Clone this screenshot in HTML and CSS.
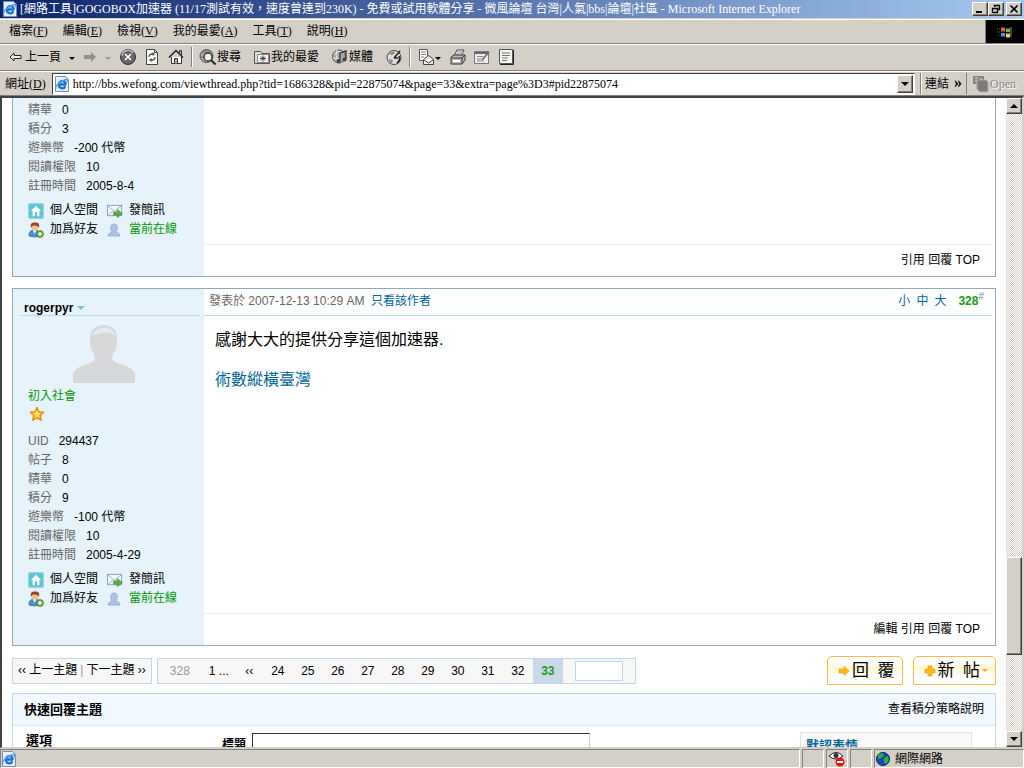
FILE: index.html
```html
<!DOCTYPE html>
<html lang="zh-TW">
<head>
  <meta charset="UTF-8" />
  <meta name="viewport" content="width=device-width, initial-scale=1" />
  <title>[網路工具]GOGOBOX加速器 - 微風論壇</title>
  <link rel="stylesheet" href="styles.css">
</head>
<body>

  <!-- 共用圖示 -->
  <svg class="sprite" aria-hidden="true">
    <symbol id="i-ie" viewBox="0 0 16 16">
      <path d="M1.500 .5h10l3 3v12h-13z" fill="#e4effb" stroke="#7890b8" />
      <path d="M12 8.500H5a3.300 3.300 0 0 0 6.300 1.800M5 8.500a3.400 3.400 0 0 1 6.800 0" fill="none" stroke="#1f6fd0" stroke-width="2.400" />
      <path d="M2 13C0 11 6 5 12 3.500c2-.4 2 1 1 2.500" fill="none" stroke="#49a0e8" stroke-width="1.300" />
    </symbol>
    <symbol id="i-home" viewBox="0 0 14 14">
      <rect x=".5" y=".5" width="13" height="13" rx="1.500" fill="#5cc4d4" stroke="#8fd6e2" />
      <path d="M7 2.500 2.500 7H4v4.500h2V8h2v3.500h2V7h1.500z" fill="#fff" />
    </symbol>
    <symbol id="i-mail" viewBox="0 0 17 14">
      <rect x=".5" y="1" width="15" height="11" fill="#f4f8ff" stroke="#7f9fd0" />
      <path d="m1 1.500 7 6 7-6M1 12l5-5M15 12l-4-5" fill="none" stroke="#8fa8cc" />
      <path d="M7 8h4V5.500l5.500 4.300L11 14v-2.500H7z" fill="#5fae3c" stroke="#3c8524" stroke-width=".6" />
    </symbol>
    <symbol id="i-friend" viewBox="0 0 16 16">
      <path d="M1 14c-.4-4 2-6 5.500-6S12 10 12 14q-5.500 2-11 0z" fill="#4a90dc" stroke="#2d62a8" stroke-width=".7" />
      <path d="m5 8 1.500 4L8.500 8z" fill="#fff" />
      <circle cx="7" cy="5" r="3.500" fill="#f3c092" />
      <path d="M3 6C2 1 4 .5 7 .5s5 1 4 5.500C10 3.500 8 4 6.500 3.600 5 3.500 4 4 3 6z" fill="#914b20" />
      <circle cx="12" cy="12" r="3.500" fill="#6cae45" stroke="#3c7d28" stroke-width=".7" />
      <path d="M12 10v4M10 12h4" stroke="#fff" stroke-width="1.300" />
    </symbol>
    <symbol id="i-online" viewBox="0 0 14 14">
      <path d="M1 13c0-3 2-3 4-4C2.500 5 3.500 1 7 1s4.500 4 2 8c2 1 4 1 4 4z" fill="#abc3e6" stroke="#86a5d3" stroke-width=".7" />
    </symbol>
  </svg>

  <header class="titlebar">
    <svg class="ico16"><use href="#i-ie" /></svg>
    <span class="window-title">[網路工具]GOGOBOX加速器 (11/17測試有效，速度曾達到230K) - 免費或試用軟體分享 - 微風論壇 台灣|人氣|bbs|論壇|社區 - Microsoft Internet Explorer</span>
    <div class="window-buttons">
      <button class="win-btn" aria-label="最小化"><svg viewBox="0 0 12 10"><path d="M2 8h6" stroke="#000" stroke-width="2" /></svg></button>
      <button class="win-btn" aria-label="還原"><svg viewBox="0 0 12 10"><path d="M4.500 3V1.500h5v4H8M4 1.500h6M2.500 4.500h5v4h-5zM2 4.500h6" fill="none" stroke="#000" stroke-width="1.300" /></svg></button>
      <button class="win-btn close" aria-label="關閉"><svg viewBox="0 0 12 10"><path d="m2.500 1.500 7 7m0-7-7 7" stroke="#000" stroke-width="1.600" /></svg></button>
    </div>
  </header>

  <div class="menubar">
    <nav class="menus">
      <button>檔案(<u>F</u>)</button>
      <button>編輯(<u>E</u>)</button>
      <button>檢視(<u>V</u>)</button>
      <button>我的最愛(<u>A</u>)</button>
      <button>工具(<u>T</u>)</button>
      <button>說明(<u>H</u>)</button>
    </nav>
    <div class="throbber">
      <svg viewBox="0 0 18 16">
        <path d="M5 4q2-1.500 4 0v4q-2-1.500-4 0z" fill="#d8603c" />
        <path d="M10 4q2 1.500 4 0v4q-2 1.500-4 0z" fill="#6fae52" />
        <path d="M5 9q2-1.500 4 0v4q-2-1.500-4 0z" fill="#5a8ee0" />
        <path d="M10 9q2 1.500 4 0v4q-2 1.500-4 0z" fill="#e8cf50" />
        <path d="M1 5h3M1 8h3M2 11h2" stroke="#5d6070" stroke-dasharray="1 1" />
        <path d="M9.500 3v11M5 8.500h9" stroke="#111" />
        <path d="M15 3v10" stroke="#888" />
      </svg>
    </div>
  </div>

  <div class="toolbar">
    <button class="tool back"><svg class="ico14" viewBox="0 0 14 14"><path d="M6 3 2 7l4 4V8.500h7v-3H6z" fill="#f2f2ee" stroke="#222" /></svg>上一頁</button>
    <i class="caret"></i>
    <button class="tool forward" aria-label="下一頁"><svg class="ico14" viewBox="0 0 14 14"><path d="M8 2v3H1v4h7v3l5-5z" fill="#909090" /></svg></button>
    <i class="caret dim"></i>
    <button class="tool" aria-label="停止"><svg class="ico18" viewBox="0 0 18 18"><circle cx="9" cy="9" r="7.500" fill="#666" stroke="#333" /><path d="M3 8a6 6 0 0 1 11-3" fill="none" stroke="#bbb" stroke-width="1.500" /><path d="m6 6 6 6m0-6-6 6" stroke="#fff" stroke-width="1.700" /></svg></button>
    <button class="tool" aria-label="重新整理"><svg class="ico18" viewBox="0 0 18 18"><path d="M3.500 1.500h8l3 3v12h-11z" fill="#fff" stroke="#444" /><path d="M11.500 1.500v3h3" fill="none" stroke="#444" /><path d="M6 9c0-2 1-3 3-3h1M12 9c0 2-1 3-3 3H8" fill="none" stroke="#555" stroke-width="1.300" /><path d="m9.500 4 2.500 2-2.500 2zM8.500 10 6 12l2.500 2z" fill="#444" /></svg></button>
    <button class="tool" aria-label="首頁"><svg class="ico18" viewBox="0 0 18 18"><path d="M4.500 9v6.500h10V9" fill="#fff" stroke="#333" /><path d="m2 9.500 7-7 7 7" fill="none" stroke="#222" stroke-width="1.500" /><path d="M12.500 5V2.500h2V7M7.500 15.500v-5h3v5" fill="#aaa" stroke="#333" /></svg></button>
    <i class="divider"></i>
    <button class="tool"><svg class="ico18" viewBox="0 0 18 18"><circle cx="7.500" cy="8" r="6.500" fill="#aaa" stroke="#555" /><path d="M3 5q5-4 9 0M2 9h4M6 2v4" stroke="#777" fill="none" /><circle cx="9" cy="9" r="4" fill="#eee" stroke="#333" stroke-width="1.300" /><path d="m12 12 4.500 4.500" stroke="#222" stroke-width="2" /></svg>搜尋</button>
    <button class="tool wide"><svg class="ico18" viewBox="0 0 18 18"><path d="M1.500 15.500v-12h6l1.500 2h7.500v10z" fill="#ddd" stroke="#555" /><path d="M4.500 6.500h11v8h-11z" fill="#f7f7f7" stroke="#888" /><path d="M10 7.500v6m-3-3h6m-5-2 4 4m0-4-4 4" stroke="#333" stroke-width=".9" /></svg>我的最愛</button>
    <button class="tool wide"><svg class="ico18" viewBox="0 0 18 18"><circle cx="8" cy="8.500" r="6.500" fill="#aaa" stroke="#555" /><path d="M3 6q4-4 8-2M2 10q5 3 8 0M6 2q-2 5 1 12" stroke="#eee" fill="none" /><path d="M9 13V5l6-2v8" fill="none" stroke="#333" stroke-width="1.300" /><circle cx="7.500" cy="13" r="2" fill="#444" /><circle cx="13.500" cy="11.500" r="2" fill="#444" /></svg>媒體</button>
    <button class="tool wide" aria-label="記錄"><svg class="ico18" viewBox="0 0 18 18"><circle cx="9" cy="9.500" r="7" fill="#ddd" stroke="#444" /><path d="M4 6q3-3 6-2-1 3-4 3zM4 11l4 1-1 3q-3-1-3-4z" fill="#888" /><path d="m9 10 6-7M9 10h4M14 8q2 4-2 7" fill="none" stroke="#222" stroke-width="1.600" /></svg></button>
    <i class="divider"></i>
    <button class="tool" aria-label="郵件"><svg class="ico18" viewBox="0 0 18 18"><path d="M2.500 1.500h8v11h-8z" fill="#fff" stroke="#555" /><path d="M4 4h5M4 6.500h5M4 9h3" stroke="#777" /><path d="m6.500 11.500 5-4 5 4v5h-10z" fill="#eee" stroke="#444" /><path d="m7 12 4.500 3 4.500-3" fill="none" stroke="#444" /></svg></button>
    <i class="caret near"></i>
    <button class="tool" aria-label="列印"><svg class="ico18" viewBox="0 0 18 18"><path d="m5 8 3-6h7l-3 6z" fill="#fff" stroke="#444" /><path d="M8 4h5M7 6h5" stroke="#888" /><path d="m2 9 3-2h11v5l-3 4H2z" fill="#bbb" stroke="#333" /><path d="M3 10h10l3-3M13 10v5" fill="none" stroke="#333" /><path d="M4 13h7" stroke="#fff" stroke-width="2" /></svg></button>
    <button class="tool" aria-label="編輯"><svg class="ico18" viewBox="0 0 18 18"><path d="M1.500 3.500h14v12h-14z" fill="#eee" stroke="#777" /><path d="M2 5h13" stroke="#666" stroke-width="2" /><path d="M4 8.500h6M4 11h4M4 13h7" stroke="#888" /><path d="m9 12 7-8" stroke="#666" stroke-width="1.700" /></svg></button>
    <button class="tool" aria-label="討論"><svg class="ico18" viewBox="0 0 18 18"><path d="M2.500 1.500h13v14h-13z" fill="#f4f4f4" stroke="#555" /><path d="M5 5h8M5 7.500h8M5 10h6M5 12.500h5" stroke="#777" /><path d="M3 16.500h13.500V2" stroke="#222" fill="none" /></svg></button>
  </div>

  <div class="addressbar">
    <label for="address">網址(<u>D</u>)</label>
    <div class="address-field">
      <svg class="ico16"><use href="#i-ie" /></svg>
      <input type="text" id="address" value="http://bbs.wefong.com/viewthread.php?tid=1686328&amp;pid=22875074&amp;page=33&amp;extra=page%3D3#pid22875074" />
      <button class="win-btn drop" aria-label="展開"><i class="caret"></i></button>
    </div>
    <button class="links-btn">連結 <b>»</b></button>
    <button class="open-btn" disabled><svg class="ico18" viewBox="0 0 18 18"><path d="M1 1h11v8H1z" fill="#858585" /><path d="M5 5h9l2 2v10H8l-3-3z" fill="#7c7c7c" stroke="#aaa" /><path d="M3 3h3M8 3l2 2M3 6h2" stroke="#ddd" /></svg>Open</button>
  </div>

  <div class="viewport">
    <main class="page">

      <article class="post clipped">
        <aside class="author">
          <dl class="profile">
            <div><dt>精華</dt><dd>0</dd></div>
            <div><dt>積分</dt><dd>3</dd></div>
            <div><dt>遊樂幣</dt><dd>-200 代幣</dd></div>
            <div><dt>閱讀權限</dt><dd>10</dd></div>
            <div><dt>註冊時間</dt><dd>2005-8-4</dd></div>
          </dl>
          <div class="actions">
            <a href="#"><svg class="ico16"><use href="#i-home" /></svg>個人空間</a>
            <a href="#"><svg class="ico16"><use href="#i-mail" /></svg>發簡訊</a>
            <a href="#"><svg class="ico16"><use href="#i-friend" /></svg>加爲好友</a>
            <span class="online"><svg class="ico14"><use href="#i-online" /></svg>當前在線</span>
          </div>
        </aside>
        <section class="content">
          <div class="message"></div>
          <footer class="post-foot"><a href="#">引用</a> <a href="#">回覆</a> <a href="#">TOP</a></footer>
        </section>
      </article>

      <article class="post">
        <aside class="author">
          <h3 class="name"><a href="#">rogerpyr</a><svg viewBox="0 0 8 5"><path d="M0 0h8L4 4z" fill="#76c1dc" /></svg></h3>
          <svg class="avatar" viewBox="0 0 62 58">
            <path d="M0 58V50c1-8 10-9 19-13 3-1 3-4 2-8-3-4-4-9-4-14C17 5 22 0 31 0s13 5 13 15c0 5-1 10-4 14-1 4-1 7 2 8 9 4 19 5 20 13v8z" fill="#d6d8da" />
            <path d="M19 10C21 2 39-1 42 10c-8-5-15 0-23 0z" fill="#e7eaec" />
          </svg>
          <p class="rank">初入社會</p>
          <svg class="star" viewBox="0 0 16 16"><path d="m8 1.500 2 4.300 4.700.5-3.500 3.200 1 4.700L8 11.900l-4.200 2.300 1-4.700L1.300 6.300 6 5.800z" fill="#ffd83c" stroke="#e58a12" stroke-width="1.400" stroke-linejoin="round" /><path d="m8 5 .8 2.500 2 .2-3.500 1z" fill="#fff6b0" /></svg>
          <dl class="profile">
            <div><dt>UID</dt><dd>294437</dd></div>
            <div><dt>帖子</dt><dd>8</dd></div>
            <div><dt>精華</dt><dd>0</dd></div>
            <div><dt>積分</dt><dd>9</dd></div>
            <div><dt>遊樂幣</dt><dd>-100 代幣</dd></div>
            <div><dt>閱讀權限</dt><dd>10</dd></div>
            <div><dt>註冊時間</dt><dd>2005-4-29</dd></div>
          </dl>
          <div class="actions">
            <a href="#"><svg class="ico16"><use href="#i-home" /></svg>個人空間</a>
            <a href="#"><svg class="ico16"><use href="#i-mail" /></svg>發簡訊</a>
            <a href="#"><svg class="ico16"><use href="#i-friend" /></svg>加爲好友</a>
            <span class="online"><svg class="ico14"><use href="#i-online" /></svg>當前在線</span>
          </div>
        </aside>
        <section class="content">
          <header class="post-head">
            <span>發表於 2007-12-13 10:29 AM&nbsp; <a href="#">只看該作者</a></span>
            <span class="sizes"><a href="#">小</a><a href="#">中</a><a href="#">大</a><strong>328<sup>#</sup></strong></span>
          </header>
          <div class="message">
            <p>感謝大大的提供分享這個加速器.</p>
            <p><a href="#">術數縱橫臺灣</a></p>
          </div>
          <footer class="post-foot"><a href="#">編輯</a> <a href="#">引用</a> <a href="#">回覆</a> <a href="#">TOP</a></footer>
        </section>
      </article>

      <div class="pagebar">
        <div class="neighbors"><span>‹‹ <a href="#">上一主題</a></span><i>|</i><span><a href="#">下一主題</a> ››</span></div>
        <nav class="pages">
          <em>328</em>
          <a href="#" class="first">1 ...</a>
          <a href="#" class="prev">‹‹</a>
          <a href="#">24</a>
          <a href="#">25</a>
          <a href="#">26</a>
          <a href="#">27</a>
          <a href="#">28</a>
          <a href="#">29</a>
          <a href="#">30</a>
          <a href="#">31</a>
          <a href="#">32</a>
          <strong>33</strong>
          <input type="text" aria-label="頁碼" />
        </nav>
        <div class="post-buttons">
          <button><svg class="ico12" viewBox="0 0 12 12"><path d="M1 4h5V1.500L11 6l-5 4.500V8H1z" fill="#fdb913" stroke="#e8a020" stroke-width=".7" /></svg>回&ensp;覆</button>
          <button><svg class="ico12" viewBox="0 0 12 12"><path d="M4 1h4v3h3v4H8v3H4V8H1V4h3z" fill="#fdb913" stroke="#e8a020" stroke-width=".7" /></svg>新&ensp;帖<i class="caret gold"></i></button>
        </div>
      </div>

      <section class="quick-reply">
        <header><h4>快速回覆主題</h4><a href="#">查看積分策略說明</a></header>
        <div class="reply-form">
          <h5>選項</h5>
          <div class="subject"><label for="subject">標題</label><input type="text" id="subject" /></div>
          <div class="smilies"><a href="#">默認表情</a></div>
        </div>
      </section>

    </main>

    <div class="scrollbar">
      <button class="win-btn" aria-label="向上捲動"><i class="caret up"></i></button>
      <div class="track"><div class="thumb"></div></div>
      <button class="win-btn" aria-label="向下捲動"><i class="caret"></i></button>
    </div>
  </div>

  <footer class="statusbar">
    <div class="status-main"><svg class="ico16"><use href="#i-ie" /></svg></div>
    <div class="pane"></div>
    <div class="pane"><svg class="ico18" viewBox="0 0 18 18"><path d="M1 6q7-7 14 0-7 6-14 0z" fill="#fff" stroke="#222" /><circle cx="8" cy="5.500" r="2.500" fill="#333" /><circle cx="12" cy="12" r="4.500" fill="#e01818" /><path d="M9 12h6" stroke="#fff" stroke-width="2" /></svg></div>
    <div class="pane"></div>
    <div class="pane zone"><svg class="ico16" viewBox="0 0 16 16"><circle cx="8" cy="8" r="6.500" fill="#1548b8" stroke="#0a2060" /><path d="M3 4q3-3 6-1l-1 3-3 1-2 2zM9 7l4-2 1 4-3 4-2-2z" fill="#35b035" /></svg>網際網路</div>
  </footer>

</body>
</html>
```

FILE: styles.css
```css
* {
  box-sizing: border-box;
}
body {
  margin: 0;
  height: 100vh;
  display: flex;
  flex-direction: column;
  overflow: hidden;
  background: #d4d0c8;
  color: #000;
  font: 12px/16px "Liberation Serif", "Noto Sans CJK TC", serif;
}
button, input {
  font: inherit;
  color: inherit;
}
button {
  padding: 0;
  border: 0;
  background: none;
  white-space: nowrap;
}
a {
  color: inherit;
  text-decoration: none;
}
h3, h4, h5, p, dl, dd {
  margin: 0;
}
svg {
  flex: none;
  display: block;
}
.sprite {
  display: none;
}
.ico12 { width: 12px; height: 12px; }
.ico14 { width: 14px; height: 14px; }
.ico16 { width: 16px; height: 16px; }
.ico18 { width: 18px; height: 18px; }

/* 小三角形 */
.caret {
  flex: none;
  border: 3px solid transparent;
  border-top-color: #000;
  border-bottom: 0;
}
.caret.dim { border-top-color: #999; }
.caret.gold { border-top-color: #f0b030; }
.caret.up {
  border: 4px solid transparent;
  border-bottom-color: #000;
  border-top: 0;
}

/* 視窗外框 */
.titlebar {
  height: 18px;
  display: flex;
  align-items: center;
  gap: 2px;
  padding: 0 2px;
  background: linear-gradient(to right, #0a246a, #a6caf0);
  color: #fff;
}
.window-title {
  flex: 1;
  overflow: hidden;
  white-space: nowrap;
}
.window-buttons {
  display: flex;
}
.win-btn {
  flex: none;
  width: 16px;
  height: 14px;
  display: flex;
  align-items: center;
  justify-content: center;
  background: #d4d0c8;
  border: 1px solid;
  border-color: #fff #404040 #404040 #fff;
  box-shadow: inset -1px -1px #808080;
}
.win-btn svg {
  width: 12px;
  height: 10px;
}
.win-btn.close {
  margin-left: 2px;
}
.win-btn .caret {
  border-left-width: 4px;
  border-right-width: 4px;
  border-top-width: 4px;
}
.win-btn .caret.up {
  border-top-width: 0;
}
.menubar, .toolbar, .addressbar {
  display: flex;
  align-items: center;
  border-top: 1px solid #fff;
  border-bottom: 1px solid #808080;
}
.menubar {
  height: 25px;
  margin-top: 1px;
  justify-content: space-between;
}
.menus {
  display: flex;
  gap: 15px;
  padding: 0 0 2px 9px;
}
.throbber {
  width: 39px;
  height: 23px;
  display: flex;
  align-items: center;
  justify-content: center;
  background: #000;
  border-left: 1px solid #808080;
}
.throbber svg {
  width: 18px;
  height: 16px;
}
.toolbar {
  height: 27px;
  gap: 6px;
  padding: 0 0 2px 8px;
}
.tool {
  display: flex;
  align-items: center;
}
.tool.wide { margin-left: 6px; }
.back { gap: 3px; }
.toolbar .caret { margin: 3px 2px 0; }
.toolbar .near { margin-left: -6px; }
.divider {
  width: 2px;
  height: 20px;
  border-left: 1px solid #808080;
  border-right: 1px solid #fff;
}
.addressbar {
  height: 25px;
  padding-left: 5px;
}
.address-field {
  flex: 1;
  height: 22px;
  display: flex;
  align-items: center;
  margin-left: 6px;
  padding: 0 1px;
  background: #fff;
  border: 1px solid;
  border-color: #404040 #fff #fff #404040;
}
.address-field input {
  flex: 1;
  min-width: 0;
  padding: 0 0 0 3px;
  border: 0;
  outline: 0;
  background: none;
}
.drop {
  height: 18px;
}
.links-btn {
  margin-left: 5px;
  padding: 0 4px;
  height: 21px;
  border-left: 1px solid #808080;
  box-shadow: inset 1px 0 #fff;
}
.links-btn b {
  margin-left: 2px;
  font-size: 16px;
}
.open-btn {
  height: 21px;
  display: flex;
  align-items: center;
  padding: 0 8px 0 5px;
  border-left: 1px solid #808080;
  color: #888;
  text-shadow: 1px 1px #fff;
}

/* 網頁內容 */
.viewport {
  flex: 1;
  min-height: 0;
  display: flex;
  background: #fff;
  border: 2px solid;
  border-color: #404040 #d4d0c8 #d4d0c8 #404040;
  border-bottom-width: 1px;
}
.page {
  flex: 1;
  min-width: 0;
  overflow: hidden;
  padding: 0 10px;
  font: 12px/19px "Liberation Sans", "Noto Sans CJK TC", sans-serif;
}
.post {
  display: grid;
  grid-template-columns: 191px 1fr;
  margin-bottom: 11px;
  border: 1px solid #8fa9bf;
}
.post.clipped {
  border-top: 0;
}
.author {
  padding: 0 4px 37px 7px;
  background: #e6f3fb;
}
.clipped .author {
  padding-top: 3px;
}
.name {
  height: 27px;
  display: flex;
  align-items: center;
  gap: 4px;
  padding: 12px 0 0 4px;
  border-bottom: 1px solid #c2d8ea;
  font-size: 12px;
  line-height: 14px;
}
.name svg {
  width: 8px;
  height: 5px;
}
.avatar {
  width: 62px;
  height: 58px;
  margin: 9px 0 4px 53px;
}
.rank {
  padding-left: 8px;
  color: #009900;
}
.star {
  width: 16px;
  height: 16px;
  margin: 0 0 10px 9px;
}
.profile {
  padding-left: 8px;
}
.profile div {
  display: flex;
  gap: 10px;
}
.profile dt {
  color: #666;
}
.actions {
  display: grid;
  grid-template-columns: 79px 1fr;
  margin-top: 5px;
  padding-left: 8px;
}
.actions a, .actions span {
  display: flex;
  align-items: center;
  gap: 6px;
}
.actions .ico14 {
  margin-right: 2px;
}
.online {
  color: #009900;
}
.content {
  display: flex;
  flex-direction: column;
}
.post-head {
  height: 27px;
  display: flex;
  justify-content: space-between;
  align-items: center;
  margin-right: 3px;
  padding: 0 8px 1px 5px;
  border-bottom: 1px solid #bcd9e9;
  color: #666;
}
.post-head a, .message a, .smilies a {
  color: #006699;
}
.sizes {
  display: flex;
  gap: 6px;
}
.sizes strong {
  margin-left: 6px;
  color: #1a9c1a;
}
.sizes sup {
  color: #888;
  font-size: 10px;
  font-weight: normal;
  line-height: 1px;
}
.message {
  flex: 1;
  padding: 14px 11px;
  font-size: 16px;
  line-height: 20px;
}
.message p + p {
  margin-top: 20px;
}
.post-foot {
  height: 32px;
  margin-right: 3px;
  padding-right: 12px;
  border-top: 1px solid #e4eef4;
  line-height: 30px;
  text-align: right;
}
.pagebar {
  display: flex;
  align-items: center;
  gap: 5px;
  margin: -1px 0 8px;
}
.neighbors, .pages {
  height: 26px;
  display: flex;
  align-items: center;
  border: 1px solid #c2d8ea;
  background: #f7f7f7;
  white-space: nowrap;
}
.neighbors {
  padding: 0 5px;
  gap: 3px;
}
.neighbors i {
  color: #999;
  font-style: normal;
}
.pages a, .pages em, .pages strong {
  width: 30px;
  line-height: 24px;
  text-align: center;
  font-style: normal;
}
.pages em {
  width: 44px;
  color: #999;
}
.pages .first { width: 34px; }
.pages .prev { width: 27px; }
.pages strong {
  background: #c9d9e9;
  color: #1a9c1a;
}
.pages input {
  width: 48px;
  height: 20px;
  margin: 0 12px;
  border: 1px solid #c2d8ea;
  background: #fff;
}
.post-buttons {
  display: flex;
  gap: 10px;
  margin-left: auto;
}
.post-buttons button {
  height: 29px;
  display: flex;
  align-items: center;
  gap: 2px;
  padding: 0 7px 0 10px;
  border: 1px solid #fdb84c;
  border-radius: 5px 5px 0 0;
  background: linear-gradient(#fff 20%, #fff6cf 40%, #fff 70%);
  font-size: 17px;
}
.quick-reply {
  border: 1px solid #c2d8ea;
}
.quick-reply header {
  height: 32px;
  display: flex;
  align-items: center;
  justify-content: space-between;
  padding: 0 11px;
  background: #f1f8fe;
  border-bottom: 1px solid #dde8f0;
}
h4, h5 {
  font-size: 13px;
}
.reply-form {
  display: flex;
  align-items: flex-start;
  padding: 5px 23px 0 13px;
}
.reply-form h5 {
  width: 196px;
}
.subject {
  display: flex;
  gap: 6px;
  padding-top: 2px;
  font-weight: bold;
}
.subject label {
  padding-top: 3px;
}
.subject input {
  width: 338px;
  height: 22px;
  border: 1px solid;
  border-color: #333 #ccc #ccc #333;
}
.smilies {
  width: 172px;
  margin: 1px 0 0 auto;
  padding: 3px 5px;
  background: #f9f9f9;
  border: 1px solid #e4e4e4;
  font-size: 13px;
  font-weight: bold;
}

/* 捲軸與狀態列 */
.scrollbar {
  width: 16px;
  display: flex;
  flex-direction: column;
}
.scrollbar .win-btn {
  height: 16px;
}
.track {
  flex: 1;
  display: flex;
  flex-direction: column;
  justify-content: flex-end;
  padding-bottom: 76px;
  background: repeating-conic-gradient(#d4d0c8 0 25%, #fff 0 50%) 0 0 / 2px 2px;
}
.thumb {
  height: 98px;
  background: #d4d0c8;
  border: 1px solid;
  border-color: #fff #404040 #404040 #fff;
  box-shadow: inset -1px -1px #808080;
}
.statusbar {
  height: 20px;
  display: flex;
  gap: 2px;
  padding-top: 1px;
}
.status-main, .pane {
  display: flex;
  align-items: center;
  border: 1px solid;
  border-color: #808080 #fff #fff #808080;
}
.status-main {
  flex: 1;
}
.pane {
  width: 22px;
  justify-content: center;
}
.zone {
  width: 150px;
  gap: 4px;
  justify-content: flex-start;
}
```
